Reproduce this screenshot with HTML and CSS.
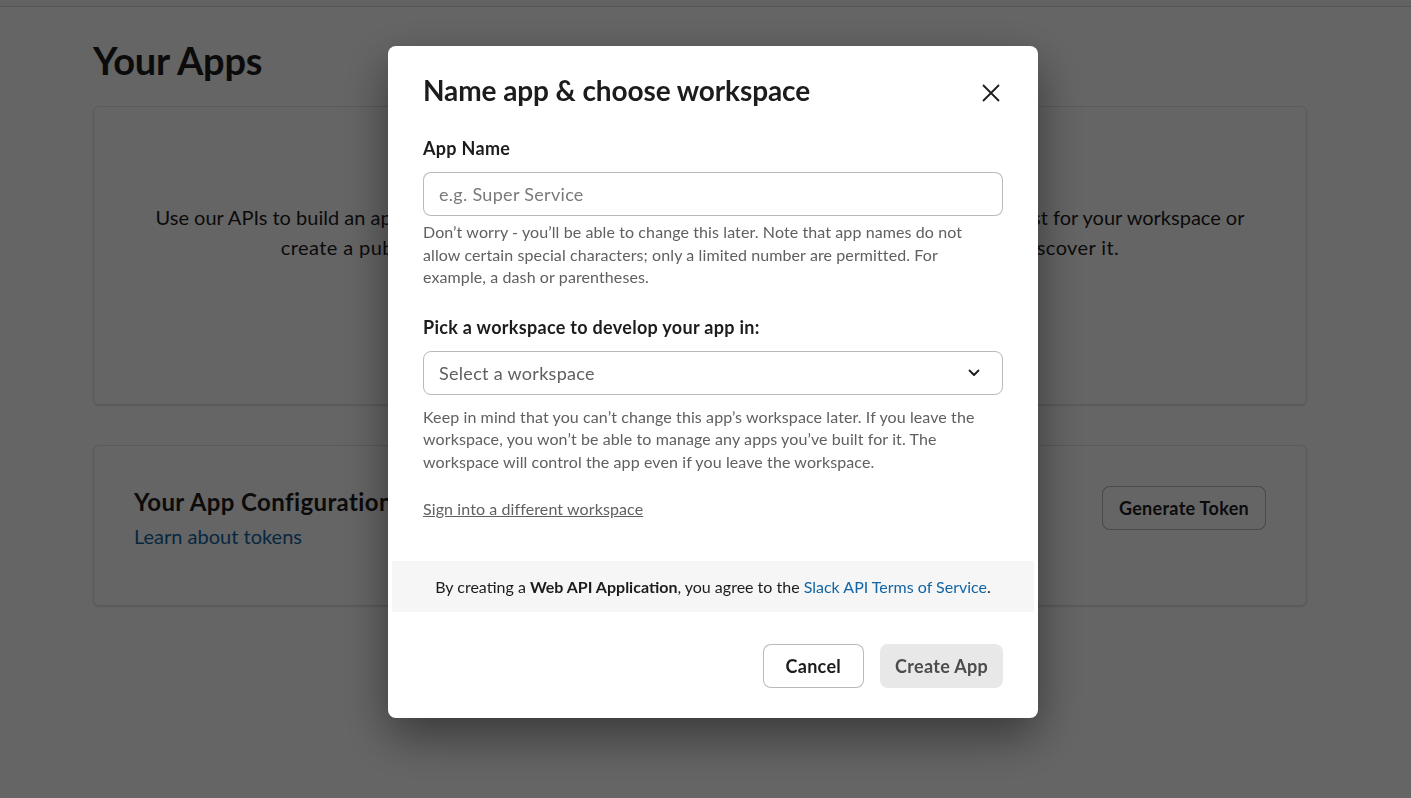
FILE: index.html
```html
<!DOCTYPE html>
<html lang="en">
<head>
    <meta charset="UTF-8">
    <meta name="viewport" content="width=device-width, initial-scale=1.0">
    <title>Your Apps</title>
    <link rel="stylesheet" href="styles.css">
</head>
<body>
    <div class="top-bar"></div>
    <main class="page">
        <h1 class="page-title">Your Apps</h1>
        <section class="card intro-card">
            <p>Use our APIs to build an app that makes people’s working lives better. You can create an app that’s just for your workspace or<br><span class="wide">create a public Slack App to list in the App Directory, where anyone on Slack can discover it.</span></p>
        </section>
        <section class="card token-card">
            <div>
                <h2>Your App Configuration Tokens</h2>
                <a href="#" class="link">Learn about tokens</a>
            </div>
            <button class="btn btn-outline">Generate Token</button>
        </section>
    </main>

    <div class="overlay">
        <div class="modal">
            <div class="modal-header">
                <h2>Name app &amp; choose workspace</h2>
                <button class="close-btn" aria-label="Close">
                    <svg width="20" height="20" viewBox="0 0 20 20"><path d="M2 2 L18 18 M18 2 L2 18" stroke="#1d1c1d" stroke-width="1.8" fill="none"/></svg>
                </button>
            </div>

            <label class="field-label" for="appName">App Name</label>
            <input id="appName" class="text-input" type="text" placeholder="e.g. Super Service">
            <p class="help">Don’t worry - you’ll be able to change this later. Note that app names do not allow certain special characters; only a limited number are permitted. For example, a dash or parentheses.</p>

            <label class="field-label label-gap">Pick a workspace to develop your app in:</label>
            <div class="select">
                <span>Select a workspace</span>
                <svg width="12" height="8" viewBox="0 0 12 8"><path d="M1.5 1.5 L6 6 L10.5 1.5" stroke="#1d1c1d" stroke-width="1.8" fill="none" stroke-linecap="round" stroke-linejoin="round"/></svg>
            </div>
            <p class="help help-second">Keep in mind that you can’t change this app’s workspace later. If you leave the workspace, you won’t be able to manage any apps you’ve built for it. The workspace will control the app even if you leave the workspace.</p>

            <a href="#" class="sign-link">Sign into a different workspace</a>

            <div class="terms">
                <span>By creating a <strong>Web API Application</strong>, you agree to the <a href="#">Slack API Terms of Service</a>.</span>
            </div>

            <div class="modal-footer">
                <button class="btn btn-outline">Cancel</button>
                <button class="btn btn-disabled">Create App</button>
            </div>
        </div>
    </div>
</body>
</html>
```

FILE: styles.css
```css
* {
    box-sizing: border-box;
}
body {
    margin: 0;
    background: #ffffff;
    font-family: Lato, "Noto Sans", sans-serif;
    color: #1d1c1d;
    min-height: 100vh;
}
.top-bar {
    height: 7px;
    background: #f8f8f8;
    border-bottom: 1px solid #d8d8d8;
}
.page {
    width: 1214px;
    margin-left: 93px;
    display: flex;
    flex-direction: column;
}
.page-title {
    font-size: 38px;
    font-weight: 700;
    letter-spacing: -0.2px;
    line-height: 48px;
    margin: 29px 0 22px;
}
.card {
    background: #fff;
    border: 1px solid #e2e2e2;
    border-radius: 6px;
    box-shadow: 0 1px 2px rgba(0, 0, 0, 0.12);
}
.intro-card {
    height: 299px;
    padding: 95px 20px 0;
    text-align: center;
}
.intro-card p {
    font-size: 20px;
    line-height: 30px;
    margin: 0;
}
.intro-card .wide {
    letter-spacing: 0.4px;
}
.token-card {
    margin-top: 40px;
    height: 161px;
    padding: 40px 40px;
    display: flex;
    justify-content: space-between;
    align-items: flex-start;
}
.token-card h2 {
    font-size: 24px;
    font-weight: 700;
    line-height: 32px;
    letter-spacing: 0.4px;
    margin: 0 0 4px;
}
.link {
    display: block;
    font-size: 20px;
    line-height: 28px;
    color: #1264a3;
    text-decoration: none;
}
.btn {
    font-family: Lato, "Noto Sans", sans-serif;
    font-size: 18px;
    font-weight: 700;
    letter-spacing: 0.3px;
    height: 44px;
    padding: 0 16px;
    border-radius: 8px;
    cursor: pointer;
    color: #1d1c1d;
}
.btn-outline {
    background: #fff;
    border: 1px solid rgba(29, 28, 29, 0.3);
}
.btn-disabled {
    background: #e8e8e8;
    border: none;
    color: #4d4c4d;
    cursor: default;
}

.overlay {
    position: fixed;
    top: 0;
    left: 0;
    right: 0;
    bottom: 0;
    background: rgba(0, 0, 0, 0.605);
    display: flex;
    align-items: flex-start;
    padding: 46px 0 0 388px;
}
.modal {
    width: 650px;
    height: 672px;
    background: #fff;
    border-radius: 8px;
    padding: 22px 35px 30px;
    box-shadow: 0 18px 48px rgba(0, 0, 0, 0.45);
    display: flex;
    flex-direction: column;
}
.modal-header {
    display: flex;
    justify-content: space-between;
    align-items: center;
    margin-bottom: 25px;
}
.modal-header h2 {
    font-size: 28px;
    font-weight: 700;
    line-height: 36px;
    letter-spacing: -0.1px;
    margin: 0;
}
.close-btn {
    width: 36px;
    height: 36px;
    margin-right: -6px;
    margin-top: 7px;
    border: none;
    background: none;
    padding: 0;
    display: flex;
    align-items: center;
    justify-content: center;
    cursor: pointer;
}
.field-label {
    font-size: 18px;
    font-weight: 700;
    letter-spacing: 0.3px;
    line-height: 24px;
    margin-bottom: 12px;
}
.label-gap {
    margin-top: 26px;
}
.text-input,
.select {
    height: 44px;
    width: 100%;
    border: 1px solid rgba(29, 28, 29, 0.3);
    border-radius: 8px;
    padding: 0 15px;
    font-family: Lato, "Noto Sans", sans-serif;
    font-size: 18px;
    letter-spacing: 0.3px;
    color: #1d1c1d;
}
.text-input::placeholder {
    color: #7b7a7b;
}
.select {
    display: flex;
    justify-content: space-between;
    align-items: center;
    color: #616061;
    padding-right: 22px;
}
.help {
    font-size: 16px;
    line-height: 22.5px;
    letter-spacing: 0.1px;
    color: #616061;
    margin: 5px 0 0;
}
.help-second {
    margin-top: 11px;
}
.sign-link {
    align-self: flex-start;
    margin-top: 25px;
    font-size: 16px;
    line-height: 22px;
    letter-spacing: 0.1px;
    color: #616061;
    text-decoration: underline;
}
.terms {
    margin: 41px -31px 0;
    height: 51px;
    background: #f6f6f6;
    display: flex;
    align-items: center;
    justify-content: center;
    font-size: 16px;
    color: #1d1c1d;
}
.terms a {
    color: #1264a3;
    text-decoration: none;
}
.modal-footer {
    margin-top: auto;
    display: flex;
    justify-content: flex-end;
    gap: 16px;
}
.modal-footer .btn-outline {
    padding: 0 22px;
}
.modal-footer .btn-disabled {
    padding: 0 15px;
}
```
